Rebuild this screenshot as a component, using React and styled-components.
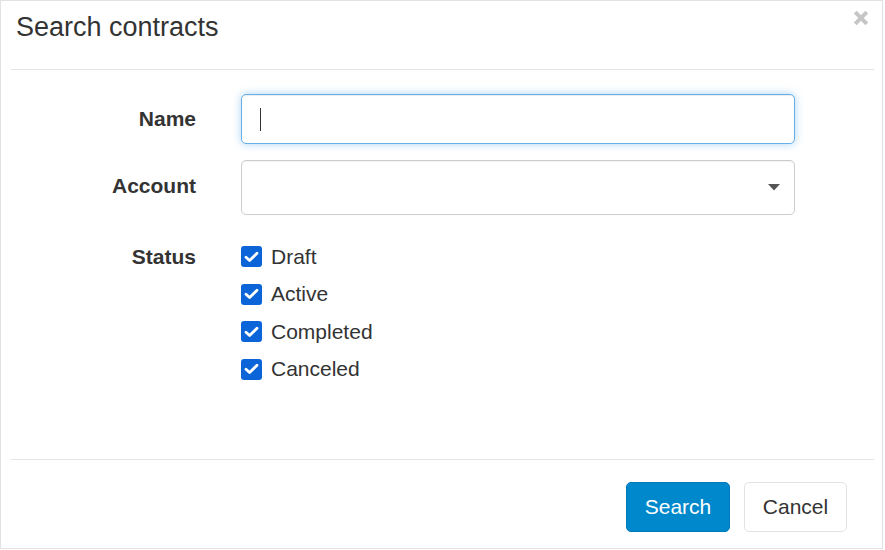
import React from 'react';
import styled, { createGlobalStyle } from 'styled-components';

const GlobalStyle = createGlobalStyle`
  html, body {
    margin: 0;
    padding: 0;
    background: #fff;
  }
  body {
    font-family: "Liberation Sans", Arial, sans-serif;
    color: #333;
  }
  * {
    box-sizing: border-box;
  }
`;

const Modal = styled.div`
  width: 883px;
  height: 549px;
  border: 1px solid #e2e2e2;
  background: #fff;
  display: flex;
  flex-direction: column;
  padding: 0 8px 0 10px;
`;

const Header = styled.div`
  height: 69px;
  border-bottom: 1px solid #e5e5e5;
  display: flex;
  justify-content: space-between;
  align-items: flex-start;
  padding: 7px 5px 0 5px;
`;

const Title = styled.h4`
  margin: 0;
  font-size: 27px;
  line-height: 38px;
  font-weight: normal;
  color: #333;
`;

const CloseButton = styled.button`
  border: 0;
  background: none;
  padding: 0;
  margin-top: 2px;
  width: 16px;
  height: 16px;
  display: flex;
  cursor: pointer;
`;

const Body = styled.div`
  flex: 1;
  padding-top: 24px;
  display: flex;
  flex-direction: column;
`;

const Row = styled.div`
  display: grid;
  grid-template-columns: 185px 554px;
  column-gap: 45px;
  align-items: ${p => (p.top ? 'start' : 'center')};
  margin-top: ${p => p.gap || 0}px;
`;

const Label = styled.label`
  text-align: right;
  font-size: 21px;
  font-weight: bold;
  line-height: ${p => p.lh || 30}px;
  padding-bottom: ${p => p.lift || 0}px;
  color: #333;
`;

const InputWrap = styled.div`
  position: relative;
  display: flex;
`;

const TextInput = styled.input`
  width: 554px;
  height: 50px;
  border: 1px solid ${p => (p.focused ? '#66afe9' : '#ccc')};
  border-radius: 5px;
  padding: 0 18px;
  font-family: inherit;
  font-size: 21px;
  color: #555;
  outline: none;
  box-shadow: ${p =>
    p.focused
      ? 'inset 0 1px 1px rgba(0,0,0,.075), 0 0 9px rgba(102,175,233,.55)'
      : 'inset 0 1px 1px rgba(0,0,0,.075)'};
`;

const Caret = styled.span`
  position: absolute;
  left: 19px;
  top: 14px;
  width: 1px;
  height: 23px;
  background: #333;
`;

const SelectBox = styled.div`
  height: 55px;
  border: 1px solid #ccc;
  border-radius: 5px;
  box-shadow: inset 0 1px 1px rgba(0, 0, 0, 0.05);
  display: flex;
  align-items: center;
  justify-content: flex-end;
  padding-right: 14px;
  cursor: pointer;
`;

const Checks = styled.div`
  display: flex;
  flex-direction: column;
`;

const CheckRow = styled.label`
  height: 37.5px;
  display: flex;
  align-items: center;
  gap: 9px;
  font-size: 21px;
  color: #333;
  cursor: pointer;
`;

const CheckBox = styled.span`
  width: 21px;
  height: 21px;
  border-radius: 3px;
  background: ${p => (p.checked ? '#0b64d8' : '#fff')};
  border: ${p => (p.checked ? 'none' : '1px solid #767676')};
  display: flex;
  align-items: center;
  justify-content: center;
`;

const Footer = styled.div`
  border-top: 1px solid #e5e5e5;
  padding: 22px 27px 16px 0;
  display: flex;
  justify-content: flex-end;
  gap: 14px;
`;

const Button = styled.button`
  height: 50px;
  width: ${p => p.w}px;
  padding: 0;
  font-family: inherit;
  font-size: 21px;
  border-radius: 5px;
  cursor: pointer;
  border: 1px solid ${p => (p.primary ? '#007ab8' : '#e3e3e3')};
  background: ${p => (p.primary ? '#0088cc' : '#fff')};
  color: ${p => (p.primary ? '#fff' : '#333')};
`;

const statuses = ['Draft', 'Active', 'Completed', 'Canceled'];

function CloseIcon() {
  return (
    <svg width="16" height="16" viewBox="0 0 16 16">
      <path
        d="M2.2 2.2 L13.8 13.8 M13.8 2.2 L2.2 13.8"
        stroke="#c6c6c6"
        strokeWidth="4"
        strokeLinecap="butt"
      />
    </svg>
  );
}

function CheckMark() {
  return (
    <svg width="15" height="12" viewBox="0 0 15 12">
      <path
        d="M2 6.2 L5.6 9.6 L13 2.2"
        fill="none"
        stroke="#fff"
        strokeWidth="2.8"
        strokeLinecap="round"
        strokeLinejoin="round"
      />
    </svg>
  );
}

function DropCaret() {
  return (
    <svg width="12" height="7" viewBox="0 0 12 7">
      <path d="M0 0 H12 L6 6.5 Z" fill="#555" />
    </svg>
  );
}

export default function App() {
  return (
    <>
      <GlobalStyle />
      <Modal>
        <Header>
          <Title>Search contracts</Title>
          <CloseButton aria-label="Close">
            <CloseIcon />
          </CloseButton>
        </Header>
        <Body>
          <Row>
            <Label>Name</Label>
            <InputWrap>
              <TextInput focused type="text" />
              <Caret />
            </InputWrap>
          </Row>
          <Row gap={16}>
            <Label lift={3}>Account</Label>
            <SelectBox>
              <DropCaret />
            </SelectBox>
          </Row>
          <Row gap={23} top>
            <Label lh={37.5}>Status</Label>
            <Checks>
              {statuses.map(s => (
                <CheckRow key={s}>
                  <CheckBox checked>
                    <CheckMark />
                  </CheckBox>
                  {s}
                </CheckRow>
              ))}
            </Checks>
          </Row>
        </Body>
        <Footer>
          <Button primary w={104}>Search</Button>
          <Button w={103}>Cancel</Button>
        </Footer>
      </Modal>
    </>
  );
}
